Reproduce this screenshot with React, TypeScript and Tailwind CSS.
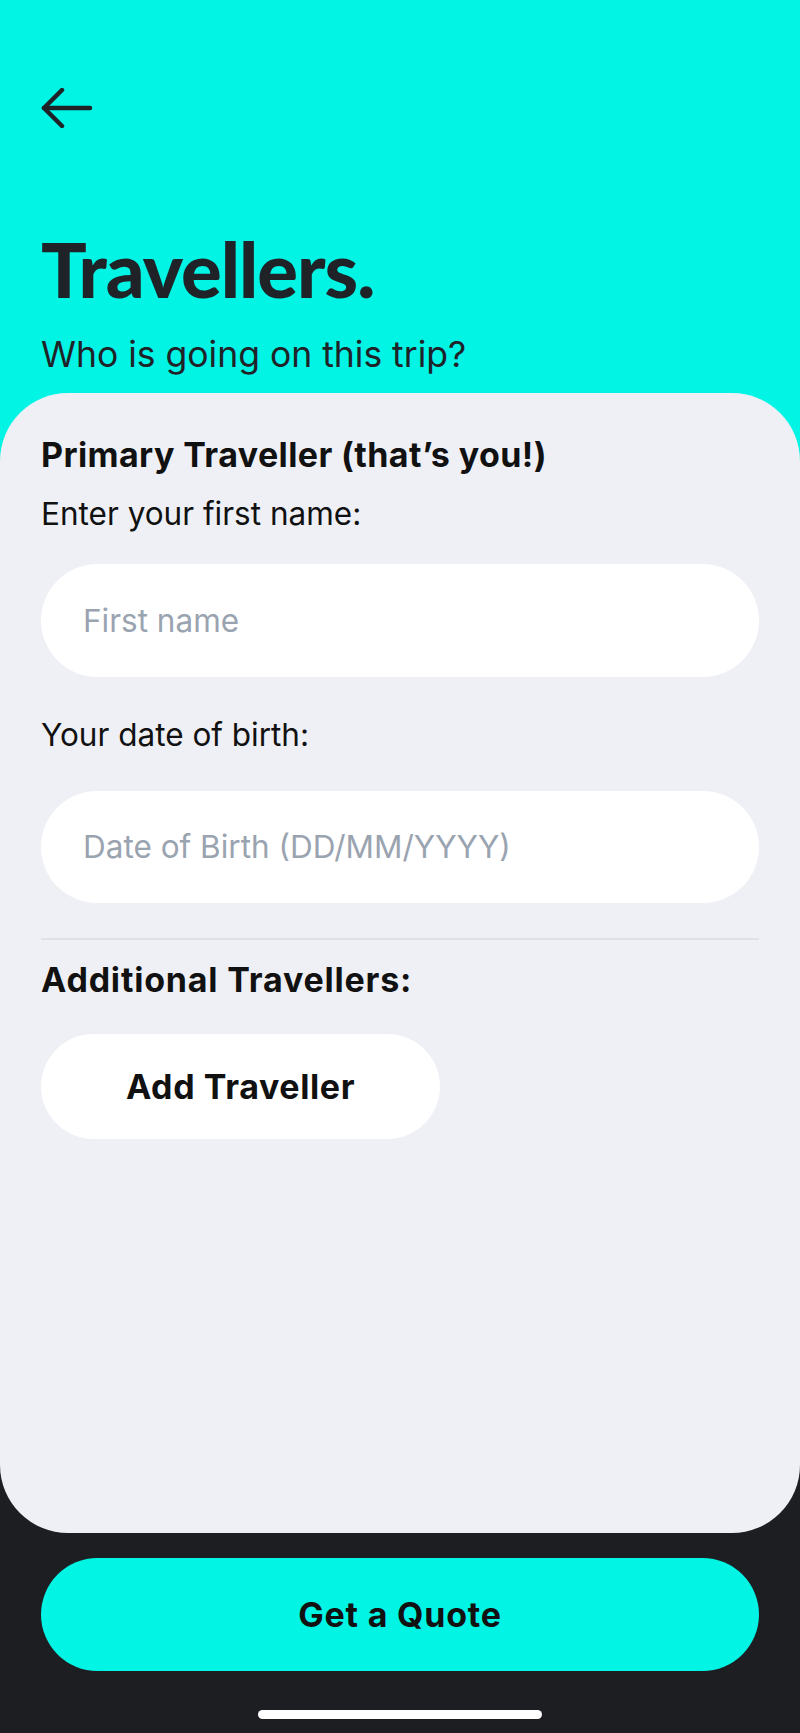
export default function App() {
  return (
    <div className="w-[800px] h-[1733px] flex flex-col bg-[#1d1e22] font-['Inter',sans-serif] overflow-hidden">
      <div className="flex flex-col bg-[linear-gradient(to_bottom,#02f4e4_50%,#1d1e22_50%)]">
        {/* Header */}
        <div className="px-[41px] pt-[88px] pb-[20px]">
          <button className="block w-[52px] h-[40px] text-[#1f2328]">
            <svg viewBox="0 0 52 40" width="52" height="40" fill="none" stroke="currentColor" strokeWidth="4.5" strokeLinecap="round" strokeLinejoin="round">
              <path d="M49 20H3" />
              <path d="M21 2L3 20l18 18" />
            </svg>
          </button>
          <h1 className="mt-[103px] text-[76px] leading-none font-black tracking-[-1px] text-[#1f2328] font-['Lato',sans-serif]">
            Travellers.
          </h1>
          <p className="mt-[30px] text-[35.5px] leading-none text-[#1f2328]">Who is going on this trip?</p>
        </div>

        {/* Card */}
        <div className="h-[1140px] rounded-[68px] bg-[#eff0f5] px-[41px] pt-[45px] flex flex-col">
          <h2 className="text-[34px] leading-none font-bold text-[#111] tracking-[0.4px]">
            Primary Traveller (that’s you!)
          </h2>
          <p className="mt-[26px] text-[31.5px] leading-none text-[#111]">Enter your first name:</p>
          <div className="mt-[35px] h-[113px] rounded-full bg-white flex items-center px-[42px]">
            <span className="text-[31.5px] text-[#9aa3b0]">First name</span>
          </div>
          <p className="mt-[42px] text-[31.5px] leading-none text-[#111]">Your date of birth:</p>
          <div className="mt-[40px] h-[112px] rounded-full bg-white flex items-center px-[42px]">
            <span className="text-[31.5px] text-[#9aa3b0]">Date of Birth (DD/MM/YYYY)</span>
          </div>
          <div className="mt-[35px] h-[2px] bg-[#dfe1e7]" />
          <h2 className="mt-[23px] text-[34px] leading-none font-bold text-[#111] tracking-[0.8px]">
            Additional Travellers:
          </h2>
          <button className="mt-[37px] w-[399px] h-[105px] rounded-full bg-white flex items-center justify-center">
            <span className="text-[34px] font-bold text-[#111] tracking-[0.6px]">Add Traveller</span>
          </button>
        </div>
      </div>

      {/* Footer */}
      <div className="px-[41px] pt-[25px]">
        <button className="w-full h-[113px] rounded-full bg-[#02f4e4] flex items-center justify-center">
          <span className="text-[34px] font-bold text-[#111] tracking-[0.8px]">Get a Quote</span>
        </button>
      </div>
      <div className="flex-1 flex items-end justify-center pb-[14px]">
        <div className="w-[284px] h-[9px] rounded-full bg-white" />
      </div>
    </div>
  );
}
